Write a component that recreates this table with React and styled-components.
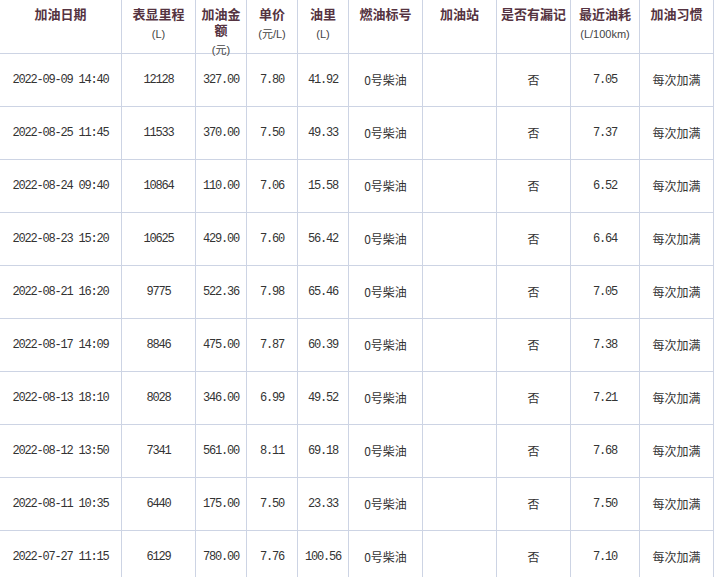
import styled, { createGlobalStyle } from "styled-components";

const GlobalStyle = createGlobalStyle`
  html, body {
    margin: 0;
    padding: 0;
    background: #fff;
  }
`;

const columns = "122px 74px 51px 51px 51px 74px 74px 74px 69px 74px";

const Grid = styled.div`
  display: grid;
  grid-template-columns: ${columns};
  grid-auto-rows: 53px;
  grid-template-rows: 54px;
  width: 714px;
  font-family: "Noto Sans CJK SC", "Liberation Sans", sans-serif;
`;

const HeadCell = styled.div`
  border-right: 1px solid #cdd4e4;
  border-bottom: 1px solid #cdd4e4;
  padding: 6px 3px 0;
  text-align: center;
  position: relative;
  z-index: 1;
`;

const Title = styled.div`
  font-size: 13px;
  line-height: 16px;
  font-weight: 700;
  color: #553341;
`;

const Sub = styled.div`
  font-family: "Liberation Sans", "Noto Sans CJK SC", sans-serif;
  font-size: 11px;
  line-height: 25px;
  color: #444;
`;

const Cell = styled.div`
  border-right: 1px solid #cdd4e4;
  border-bottom: 1px solid #cdd4e4;
  display: flex;
  align-items: center;
  justify-content: center;
  padding-bottom: 1px;
  color: #333;
  font-size: 12px;
  font-family: ${(p) =>
    p.$mono
      ? `"Liberation Mono", "Noto Sans CJK SC", monospace`
      : `"Noto Sans CJK SC", "Liberation Sans", sans-serif`};
  letter-spacing: ${(p) => (p.$mono ? "-1.2px" : "0")};
  white-space: nowrap;
`;

const headers = [
  { title: "加油日期" },
  { title: "表显里程", sub: "(L)" },
  { title: "加油金额", sub: "(元)" },
  { title: "单价", sub: "(元/L)" },
  { title: "油里", sub: "(L)" },
  { title: "燃油标号" },
  { title: "加油站" },
  { title: "是否有漏记" },
  { title: "最近油耗", sub: "(L/100km)" },
  { title: "加油习惯" },
];

const rows = [
  ["2022-09-09 14:40", "12128", "327.00", "7.80", "41.92", "7.05"],
  ["2022-08-25 11:45", "11533", "370.00", "7.50", "49.33", "7.37"],
  ["2022-08-24 09:40", "10864", "110.00", "7.06", "15.58", "6.52"],
  ["2022-08-23 15:20", "10625", "429.00", "7.60", "56.42", "6.64"],
  ["2022-08-21 16:20", "9775", "522.36", "7.98", "65.46", "7.05"],
  ["2022-08-17 14:09", "8846", "475.00", "7.87", "60.39", "7.38"],
  ["2022-08-13 18:10", "8028", "346.00", "6.99", "49.52", "7.21"],
  ["2022-08-12 13:50", "7341", "561.00", "8.11", "69.18", "7.68"],
  ["2022-08-11 10:35", "6440", "175.00", "7.50", "23.33", "7.50"],
  ["2022-07-27 11:15", "6129", "780.00", "7.76", "100.56", "7.10"],
];

export default function App() {
  return (
    <>
      <GlobalStyle />
      <Grid>
        {headers.map((h) => (
          <HeadCell key={h.title}>
            <Title>{h.title}</Title>
            {h.sub && <Sub>{h.sub}</Sub>}
          </HeadCell>
        ))}
        {rows.map((r) => [
          <Cell $mono key={r[0] + "d"}>{r[0]}</Cell>,
          <Cell $mono key={r[0] + "m"}>{r[1]}</Cell>,
          <Cell $mono key={r[0] + "a"}>{r[2]}</Cell>,
          <Cell $mono key={r[0] + "p"}>{r[3]}</Cell>,
          <Cell $mono key={r[0] + "v"}>{r[4]}</Cell>,
          <Cell key={r[0] + "f"}>0号柴油</Cell>,
          <Cell key={r[0] + "s"} />,
          <Cell key={r[0] + "l"}>否</Cell>,
          <Cell $mono key={r[0] + "c"}>{r[5]}</Cell>,
          <Cell key={r[0] + "h"}>每次加满</Cell>,
        ])}
      </Grid>
    </>
  );
}
